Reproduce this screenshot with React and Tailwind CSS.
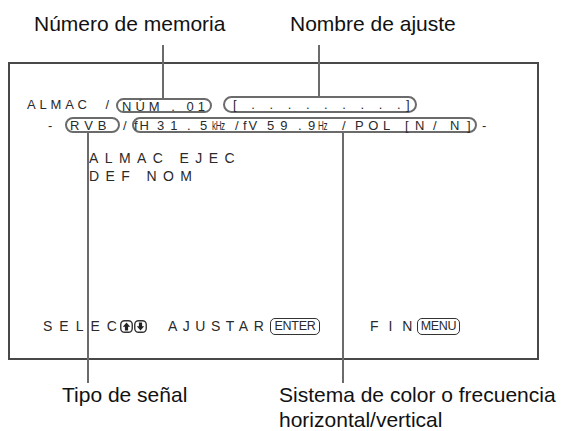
const Oval = ({ className, children }) => (
  <span className={`flex items-center rounded-full border-2 border-[#6b6b6b] ${className}`}>{children}</span>
);

const C = ({ className, children }) => (
  <span className={`inline-block whitespace-pre ${className}`}>{children}</span>
);

const Unit = ({ className, children }) => (
  <span className={`inline-block ${className}`}>
    <span className="inline-block origin-left scale-x-[0.62] text-[13px] tracking-[-0.6px]">{children}</span>
  </span>
);

const Up = () => (
  <svg width="13" height="13" viewBox="0 0 13 13">
    <rect x="0.75" y="0.75" width="11.5" height="11.5" rx="3.8" fill="none" stroke="#333" strokeWidth="1.4" />
    <path d="M6.5 2.6 L10.2 6.7 H8.1 V10.5 H4.9 V6.7 H2.8 Z" fill="#222" />
  </svg>
);

const Down = () => (
  <svg width="13" height="13" viewBox="0 0 13 13">
    <rect x="0.75" y="0.75" width="11.5" height="11.5" rx="3.8" fill="none" stroke="#333" strokeWidth="1.4" />
    <path d="M6.5 10.4 L10.2 6.3 H8.1 V2.5 H4.9 V6.3 H2.8 Z" fill="#222" />
  </svg>
);

export default function App() {
  return (
    <div className="relative h-[431px] w-[571px] overflow-hidden bg-white font-['Liberation_Sans',Arial,sans-serif] text-[#111]">
      {/* top callout labels */}
      <div className="flex h-[62px] pt-[11px] text-[21px] leading-[26px]">
        <div className="w-[290px] pl-[34px]">Número de memoria</div>
        <div>Nombre de ajuste</div>
      </div>

      {/* OSD screen */}
      <div className="ml-[8px] flex h-[298px] w-[531px] flex-col border-2 border-[#484848] pt-[32px] text-[#2a2a2a]">
        {/* row 1 */}
        <div className="flex h-[17px] items-end pl-[17px] text-[13px] leading-[15px]">
          <C className="w-[89px] pb-[1px] tracking-[3.8px]">ALMAC  /</C>
          <Oval className="h-[15px] w-[96px] pl-[4px] tracking-[4px]">
            <span className="relative top-[1px] whitespace-pre">NÚM . 01</span>
          </Oval>
          <Oval className="ml-[11px] h-[17px] w-[194px] pl-[8px] tracking-[5.5px]">
            <span className="whitespace-pre">[ . . . . . . . . .]</span>
          </Oval>
        </div>

        {/* row 2 */}
        <div className="mt-[4px] flex h-[16px] items-center pl-[38px] text-[13px] leading-[15px]">
          <C className="w-[17px]">-</C>
          <Oval className="h-[16px] w-[55px] pl-[3px] tracking-[5px]">
            <span>RVB</span>
          </Oval>
          <C className="w-[12px] pl-[3px]">/</C>
          <Oval className="h-[16px] w-[345px]">
            <C className="w-[23px] tracking-[2px]">fH</C>
            <C className="w-[30px] tracking-[6px]">31</C>
            <C className="w-[13px]">.</C>
            <C className="w-[12px]">5</C>
            <Unit className="w-[23px]">kHz</Unit>
            <C className="w-[8px]">/</C>
            <C className="w-[24px] tracking-[2px]">fV</C>
            <C className="w-[31px] tracking-[6px]">59</C>
            <C className="w-[10px]">.</C>
            <C className="w-[10px]">9</C>
            <Unit className="w-[24px]">Hz</Unit>
            <C className="w-[13px]">/</C>
            <C className="w-[50px] tracking-[4.6px]">POL</C>
            <C className="w-[10px]">[</C>
            <C className="w-[18px]">N</C>
            <C className="w-[17px]">/</C>
            <C className="w-[17px]">N</C>
            <C>]</C>
          </Oval>
          <C className="ml-[5px]">-</C>
        </div>

        {/* menu items */}
        <div className="mt-[16px] pl-[79px] text-[14px] leading-[18px] tracking-[6.4px]">
          <div className="whitespace-pre">ALMAC EJEC</div>
          <div className="whitespace-pre">DEF NOM</div>
        </div>

        {/* bottom guide row */}
        <div className="mt-[132px] flex h-[18px] items-center pl-[33px] text-[14px] leading-[18px]">
          <C className="w-[77px] tracking-[7px]">SELEC</C>
          <span className="flex gap-[1px]">
            <Up />
            <Down />
          </span>
          <C className="ml-[21px] w-[102px] tracking-[5.5px]">AJUSTAR</C>
          <span className="flex h-[17px] w-[50px] items-center justify-center rounded-[5px] border border-[#333] text-[12.5px] leading-[14px] tracking-[-0.3px]">
            ENTER
          </span>
          <C className="ml-[50px] w-[47px] tracking-[3px]">F I N</C>
          <span className="flex h-[17px] w-[43px] items-center justify-center rounded-[5px] border border-[#333] text-[12.5px] leading-[14px] tracking-[-0.3px]">
            MENU
          </span>
        </div>
      </div>

      {/* bottom callout labels */}
      <div className="flex pt-[22px] text-[21px] leading-[25px]">
        <div className="w-[279px] pl-[62px]">Tipo de señal</div>
        <div>
          Sistema de color o frecuencia
          <br />
          horizontal/vertical
        </div>
      </div>

      {/* leader lines */}
      <div className="absolute left-[162px] top-[45px] h-[53px] w-[2px] bg-[#6b6b6b]" />
      <div className="absolute left-[318px] top-[45px] h-[51px] w-[2px] bg-[#6b6b6b]" />
      <div className="absolute left-[87px] top-[133px] h-[250px] w-[2px] bg-[#6b6b6b]" />
      <div className="absolute left-[342px] top-[133px] h-[250px] w-[2px] bg-[#6b6b6b]" />
    </div>
  );
}
